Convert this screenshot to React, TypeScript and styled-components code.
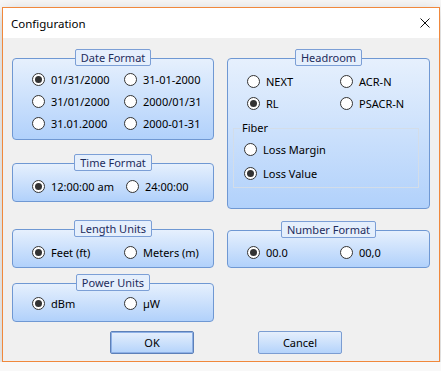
import styled, { createGlobalStyle } from "styled-components";

const GlobalStyle = createGlobalStyle`
  html, body {
    margin: 0;
    background: #f8f8f8;
  }
  body {
    font-family: "Noto Sans", "Liberation Sans", sans-serif;
    font-size: 11px;
    color: #000;
  }
`;

type Opt = { label: string; on?: boolean };

const RadioGroup = ({
  title,
  top,
  height,
  rows,
  padTop,
  col,
  options,
  children,
}: {
  title: string;
  top: number;
  height: number;
  rows: number;
  padTop: number;
  col: number;
  options: Opt[];
  children?: React.ReactNode;
}) => (
  <Group $top={top}>
    <Legend>{title}</Legend>
    <Box $height={height}>
      <Options $row={rows} $padTop={padTop} $col={col}>
        {options.map((o) => (
          <Option key={o.label}>
            <Radio $on={o.on} />
            {o.label}
          </Option>
        ))}
      </Options>
      {children}
    </Box>
  </Group>
);

export default function App() {
  return (
    <>
      <GlobalStyle />
      <Window>
        <TitleBar>
          <Title>Configuration</Title>
          <Close width="10" height="10" viewBox="0 0 10 10">
            <path d="M0.5 0.5 L9.5 9.5 M9.5 0.5 L0.5 9.5" stroke="#111" strokeWidth="1" />
          </Close>
        </TitleBar>
        <Client>
          <Columns>
            <Column>
              <RadioGroup
                title="Date Format"
                top={11}
                height={82}
                rows={22}
                padTop={9}
                col={92}
                options={[
                  { label: "01/31/2000", on: true },
                  { label: "31-01-2000" },
                  { label: "31/01/2000" },
                  { label: "2000/01/31" },
                  { label: "31.01.2000" },
                  { label: "2000-01-31" },
                ]}
              />
              <RadioGroup
                title="Time Format"
                top={14}
                height={39}
                rows={18}
                padTop={13}
                col={94}
                options={[{ label: "12:00:00 am", on: true }, { label: "24:00:00" }]}
              />
              <RadioGroup
                title="Length Units"
                top={18}
                height={39}
                rows={18}
                padTop={13}
                col={92}
                options={[{ label: "Feet (ft)", on: true }, { label: "Meters (m)" }]}
              />
              <RadioGroup
                title="Power Units"
                top={6}
                height={39}
                rows={18}
                padTop={10}
                col={92}
                options={[{ label: "dBm", on: true }, { label: "µW" }]}
              />
            </Column>
            <Column>
              <RadioGroup
                title="Headroom"
                top={11}
                height={151}
                rows={22}
                padTop={11}
                col={93}
                options={[
                  { label: "NEXT" },
                  { label: "ACR-N" },
                  { label: "RL", on: true },
                  { label: "PSACR-N" },
                ]}
              >
                <Fiber>
                  <FiberLegend>Fiber</FiberLegend>
                  <FiberOption>
                    <Radio />
                    Loss Margin
                  </FiberOption>
                  <FiberOption>
                    <Radio $on />
                    Loss Value
                  </FiberOption>
                </Fiber>
              </RadioGroup>
              <RadioGroup
                title="Number Format"
                top={12}
                height={38}
                rows={18}
                padTop={12}
                col={93}
                options={[{ label: "00.0", on: true }, { label: "00,0" }]}
              />
            </Column>
          </Columns>
          <Buttons>
            <Button $default>OK</Button>
            <Button>Cancel</Button>
          </Buttons>
        </Client>
      </Window>
    </>
  );
}

const Window = styled.div`
  width: 438px;
  height: 355px;
  box-sizing: border-box;
  margin: 7px 0 0 2px;
  border: 1px solid #f0883c;
  background: #f0f0f0;
  box-shadow: 0 5px 16px rgba(0, 0, 0, 0.22);
  display: flex;
  flex-direction: column;
`;

const TitleBar = styled.div`
  height: 30px;
  flex: none;
  background: #fff;
  display: flex;
  align-items: center;
  justify-content: space-between;
  padding: 0 9px 0 8px;
`;

const Title = styled.span`
  font-size: 11.5px;
  color: #000;
`;

const Close = styled.svg`
  display: block;
`;

const Client = styled.div`
  flex: 1;
  padding: 0 9px;
  display: flex;
  flex-direction: column;
`;

const Columns = styled.div`
  display: grid;
  grid-template-columns: 202px 203px;
  column-gap: 13px;
  align-items: start;
`;

const Column = styled.div`
  display: flex;
  flex-direction: column;
`;

const Group = styled.div<{ $top: number }>`
  display: flex;
  flex-direction: column;
  align-items: center;
  margin-top: ${(p) => p.$top}px;
`;

const Legend = styled.div`
  position: relative;
  z-index: 1;
  height: 17px;
  box-sizing: border-box;
  padding: 0 5px;
  margin-bottom: -8px;
  line-height: 15px;
  color: #1d2c5c;
  background: #e5effc;
  border: 1px solid #7c9fd6;
  border-radius: 2px;
`;

const Box = styled.div<{ $height: number }>`
  align-self: stretch;
  height: ${(p) => p.$height}px;
  box-sizing: border-box;
  border: 1px solid #6f98d3;
  border-radius: 4px;
  background: linear-gradient(#e6f0fd, #b1d1fb);
`;

const Options = styled.div<{ $row: number; $padTop: number; $col: number }>`
  display: grid;
  grid-template-columns: ${(p) => p.$col}px auto;
  grid-auto-rows: ${(p) => p.$row}px;
  padding: ${(p) => p.$padTop}px 0 0 19px;
`;

const Option = styled.label`
  display: flex;
  align-items: center;
  gap: 6px;
  white-space: nowrap;
`;

const Radio = styled.span<{ $on?: boolean }>`
  width: 13px;
  height: 13px;
  flex: none;
  box-sizing: border-box;
  border-radius: 50%;
  border: 1px solid #333;
  background: #fff;
  display: flex;
  align-items: center;
  justify-content: center;
  &::after {
    content: "";
    width: 7px;
    height: 7px;
    border-radius: 50%;
    background: ${(p) => (p.$on ? "#333" : "transparent")};
  }
`;

const Fiber = styled.fieldset`
  margin: 7px 10px 0 5px;
  padding: 2px 0 2px 10px;
  border: 1px solid #d3dde9;
  border-radius: 0;
  min-width: 0;
`;

const FiberLegend = styled.legend`
  margin-left: -4px;
  padding: 0 2px;
  line-height: 14px;
`;

const FiberOption = styled(Option)`
  height: 24px;
`;

const Buttons = styled.div`
  display: flex;
  gap: 64px;
  margin: 9px 0 0 98px;
`;

const Button = styled.button<{ $default?: boolean }>`
  width: 84px;
  height: 23px;
  box-sizing: border-box;
  padding: 0;
  font-family: "Noto Sans", "Liberation Sans", sans-serif;
  font-size: 11px;
  color: #000;
  border-radius: 2px;
  border: 1px solid ${(p) => (p.$default ? "#5d80b8" : "#7b9dd2")};
  box-shadow: ${(p) => (p.$default ? "inset 0 0 0 1px #8db0e6" : "none")};
  background: linear-gradient(#e5effc, #b4d3fb);
`;
